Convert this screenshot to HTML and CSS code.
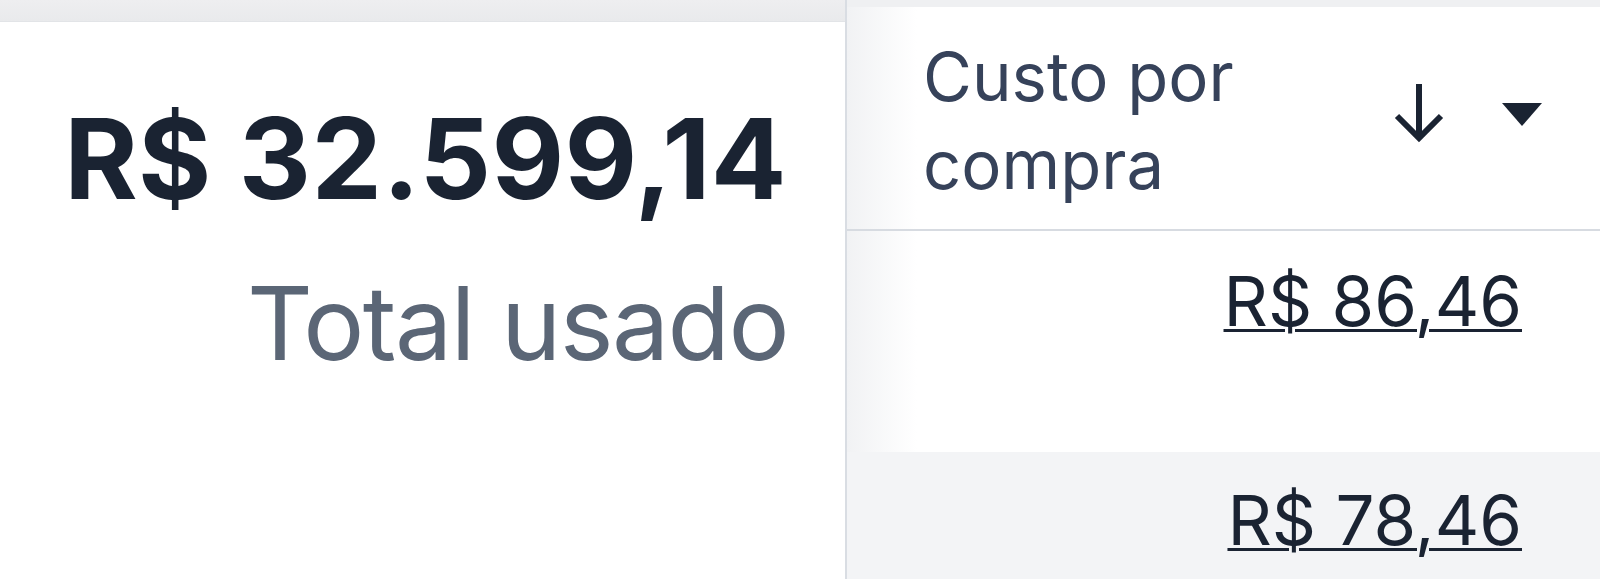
FILE: index.html
```html
<!DOCTYPE html>
<html lang="pt-BR">
<head>
  <meta charset="UTF-8">
  <title>Custos</title>
  <link rel="stylesheet" href="styles.css">
</head>
<body>
  <div class="board">
    <section class="summary">
      <div class="strip"></div>
      <div class="summary-body">
        <div class="total">R$ 32.599,14</div>
        <div class="total-label">Total usado</div>
      </div>
    </section>

    <section class="table">
      <div class="strip thin"></div>
      <div class="table-head">
        <div class="col-title">Custo por<br>compra</div>
        <div class="col-tools">
          <svg class="sort" width="50" height="62" viewBox="0 0 50 62">
            <path d="M25 3 V57 M3 35 L25 57 L47 35" fill="none" stroke="#1a2332" stroke-width="6"/>
          </svg>
          <svg class="caret" width="40" height="24" viewBox="0 0 40 24">
            <path d="M0 0 H40 L20 23 Z" fill="#1a2332"/>
          </svg>
        </div>
      </div>
      <div class="row">
        <a class="money" href="#">R$ 86,46</a>
      </div>
      <div class="row alt">
        <a class="money" href="#">R$ 78,46</a>
      </div>
    </section>
  </div>
</body>
</html>
```

FILE: styles.css
```css
* {
  box-sizing: border-box;
}

body {
  margin: 0;
  font-family: Inter, "Noto Sans", sans-serif;
  color: #1a2332;
  background: #fff;
  overflow: hidden;
}

.board {
  display: flex;
  width: 1600px;
  height: 579px;
  overflow: hidden;
}

.strip {
  height: 22px;
  background: linear-gradient(to bottom, #eeeef0, #e9eaec);
  border-bottom: 1px solid #e2e4e7;
}

.strip.thin {
  height: 7px;
  border-bottom: none;
  background: #eff0f2;
}

/* left card with the big total */
.summary {
  width: 847px;
  border-right: 2px solid #d9dde3;
}

.summary-body {
  padding: 80px 58px 0 0;
  text-align: right;
}

.total {
  font-size: 112px;
  font-weight: 700;
  line-height: 1;
  letter-spacing: 0.4px;
}

.total-label {
  margin-top: 58px;
  font-size: 102px;
  font-weight: 400;
  line-height: 1;
  letter-spacing: -1.6px;
  margin-right: -1px;
  color: #5b6676;
}

/* right table column */
.table {
  flex: 1;
  background: linear-gradient(to right, #f1f2f4, #fff 70px);
}

.table-head {
  height: 224px;
  display: flex;
  align-items: center;
  justify-content: space-between;
  padding: 0 58px 0 76px;
  border-bottom: 2px solid #d7dbe1;
}

.col-title {
  font-size: 67px;
  line-height: 88px;
  color: #36425a;
  margin-top: 6px;
}

.col-tools {
  display: flex;
  align-items: center;
  gap: 58px;
  margin-top: -12px;
}

.caret {
  margin-top: 6px;
}

.row {
  height: 221px;
  display: flex;
  justify-content: flex-end;
  align-items: flex-start;
  padding: 29px 78px 0 0;
}

.row.alt {
  background: #f3f4f6;
  padding-top: 27px;
}

.money {
  font-size: 69px;
  line-height: 1.2;
  color: #1a2332;
  text-decoration: underline;
  text-decoration-thickness: 3px;
  text-underline-offset: 3px;
}
```
